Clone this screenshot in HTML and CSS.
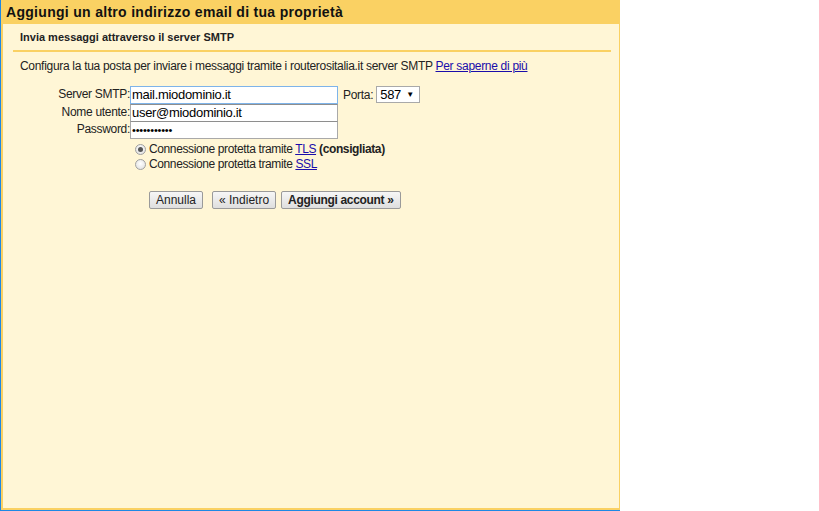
FILE: index.html
```html
<!DOCTYPE html>
<html lang="it">
<head>
<meta charset="utf-8">
<title>Aggiungi un altro indirizzo email</title>
<link rel="stylesheet" href="styles.css">
</head>
<body>
<div class="frame">
  <div class="header">Aggiungi un altro indirizzo email di tua proprietà</div>
  <div class="panel">
    <div class="subhead">Invia messaggi attraverso il server SMTP</div>
    <p class="intro">Configura la tua posta per inviare i messaggi tramite i routerositalia.it server SMTP <a href="#">Per saperne di più</a></p>
    <div class="form">
      <div class="row first">
        <label class="lbl">Server SMTP:</label>
        <span class="input focus">mail.miodominio.it</span>
        <span class="porta">Porta:</span>
        <span class="select">587 <span class="arrow">▼</span></span>
      </div>
      <div class="row">
        <label class="lbl">Nome utente:</label>
        <span class="input">user@miodominio.it</span>
      </div>
      <div class="row">
        <label class="lbl">Password:</label>
        <span class="input pw">•••••••••••</span>
      </div>
      <div class="radios">
        <div class="radio-row"><span class="radio checked"></span><span class="rtext">Connessione protetta tramite <a href="#">TLS</a> <b>(consigliata)</b></span></div>
        <div class="radio-row"><span class="radio"></span><span class="rtext">Connessione protetta tramite <a href="#">SSL</a></span></div>
      </div>
      <div class="buttons">
        <span class="btn">Annulla</span>
        <span class="btn back">« Indietro</span>
        <span class="btn primary">Aggiungi account »</span>
      </div>
    </div>
  </div>
</div>
</body>
</html>
```

FILE: styles.css
```css
html, body {
  margin: 0;
  padding: 0;
  background: #ffffff;
}
body {
  font-family: "Liberation Sans", Arial, sans-serif;
  font-size: 12px;
  color: #222222;
  letter-spacing: -0.3px;
}
.frame {
  width: 619px;
  height: 510px;
  border-left: 1px solid #1e88e5;
  border-bottom: 1px solid #1e88e5;
  display: flex;
  flex-direction: column;
}
.header {
  height: 24px;
  line-height: 25px;
  background: #fad163;
  font-weight: bold;
  font-size: 14px;
  padding-left: 5px;
  color: #111111;
  letter-spacing: 0.3px;
}
.panel {
  flex: 1;
  background: #fff6d6;
  border-left: 2px solid #fad163;
  border-right: 1px solid #fad163;
  border-bottom: 2px solid #fad163;
}
.subhead {
  margin: 0 8px 0 10px;
  padding: 7px 0 0 7px;
  height: 19px;
  border-bottom: 2px solid #fad163;
  font-weight: bold;
  font-size: 11px;
  line-height: 12px;
  letter-spacing: 0;
}
.intro {
  margin: 7px 0 0 17px;
  line-height: 14px;
}
a {
  color: #1a0dab;
  text-decoration: underline;
}
.form {
  margin-top: 13px;
}
.row {
  display: flex;
  align-items: flex-start;
  height: 17px;
}
.row.first {
  height: 18px;
}
.lbl {
  width: 127px;
  text-align: right;
  line-height: 14px;
  padding-top: 1px;
}
.input {
  box-sizing: border-box;
  width: 208px;
  height: 18px;
  border: 1px solid #a9a9a9;
  border-top-color: #8e8e8e;
  background: #ffffff;
  font-size: 13px;
  line-height: 16px;
  padding-left: 1px;
  color: #000;
}
.input.focus {
  border-color: #7eb4ea;
}
.input.pw {
  font-size: 11px;
  letter-spacing: -0.2px;
  line-height: 16px;
}
.porta {
  margin-left: 5px;
  line-height: 16px;
  padding-top: 1px;
}
.select {
  box-sizing: border-box;
  margin-left: 3px;
  width: 44px;
  height: 17px;
  border: 1px solid #a9a9a9;
  background: #ffffff;
  font-size: 13px;
  line-height: 15px;
  padding-left: 3px;
  color: #000;
}
.arrow {
  font-size: 8px;
  vertical-align: 2px;
  margin-left: 2px;
}
.radios {
  margin-top: 4px;
  padding-left: 132px;
}
.radio-row {
  display: flex;
  align-items: center;
  height: 15px;
  line-height: 15px;
}
.rtext {
  white-space: nowrap;
  letter-spacing: -0.38px;
}
.radio {
  box-sizing: border-box;
  width: 11px;
  height: 11px;
  border-radius: 50%;
  border: 1px solid #a0a0a0;
  background: radial-gradient(circle at 50% 40%, #ffffff 0%, #dcdcdc 100%);
  margin-right: 3px;
  position: relative;
}
.radio.checked::after {
  content: "";
  position: absolute;
  left: 2px;
  top: 2px;
  width: 5px;
  height: 5px;
  border-radius: 50%;
  background: #555555;
}
.buttons {
  display: flex;
  margin-top: 19px;
  padding-left: 146px;
}
.btn {
  box-sizing: border-box;
  height: 18px;
  line-height: 16px;
  border: 1px solid #9a9a9a;
  border-radius: 2px;
  background: linear-gradient(#f6f6f6, #dedede);
  padding: 0 6px;
  color: #222;
  font-size: 12px;
  letter-spacing: 0;
}
.btn.back {
  margin-left: 9px;
}
.btn.primary {
  margin-left: 5px;
  font-weight: bold;
  letter-spacing: -0.32px;
}
```
